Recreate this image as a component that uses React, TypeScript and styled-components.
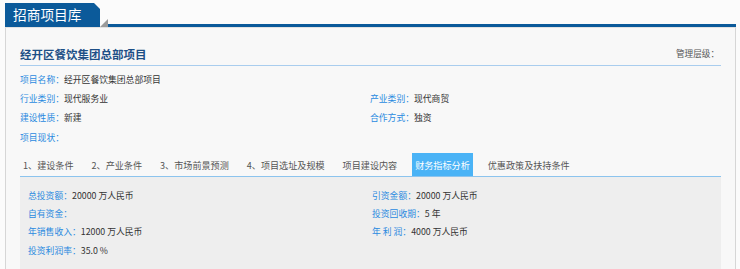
import * as React from "react";
import styled, { createGlobalStyle } from "styled-components";

const GlobalStyle = createGlobalStyle`
  html, body {
    margin: 0;
    padding: 0;
    background: #fbfbfb;
    font-family: "Microsoft YaHei", "Noto Sans CJK SC", "Noto Sans", sans-serif;
  }
`;

const Page = styled.div`
  width: 731px;
  padding: 3px 0 0 5px;
`;

const Header = styled.div`
  display: flex;
  align-items: flex-end;
  height: 24px;
`;

const HeaderTab = styled.div`
  width: 87px;
  height: 24px;
  padding-left: 8px;
  background: #0b5a9a;
  color: #fff;
  font-size: 13.7px;
  line-height: 23px;
  clip-path: polygon(0 0, 89px 0, 95px 6px, 95px 100%, 0 100%);
`;

const Fold = styled.svg`
  display: block;
  flex: none;
`;

const HeaderLine = styled.div`
  flex: 1;
  height: 3px;
  background: #0b5a9a;
`;

const Panel = styled.div`
  background: #f8f8f8;
  border-left: 1px solid #d6d6d6;
  border-right: 1px solid #d6d6d6;
  border-top: 1px solid #e2e2e2;
  padding: 0 14px;
`;

const TitleRow = styled.div`
  display: flex;
  justify-content: space-between;
  align-items: flex-end;
  height: 38px;
  border-bottom: 1px solid #a9cdee;
  box-sizing: border-box;
`;

const Title = styled.h2`
  margin: 0 0 4px;
  font-size: 11.5px;
  line-height: 14px;
  font-weight: bold;
  color: #1d4f86;
`;

const Level = styled.span`
  margin: 0 2px 6px 0;
  font-size: 8.6px;
  line-height: 12px;
  color: #555;
`;

const InfoGrid = styled.div<{ $col: number; $row: number; $top?: number }>`
  display: grid;
  grid-template-columns: ${(p) => p.$col}px 1fr;
  grid-auto-rows: ${(p) => p.$row}px;
  align-items: center;
  margin-top: ${(p) => p.$top ?? 0}px;
`;

const Field = styled.div`
  font-size: 8.8px;
  line-height: 12px;
  color: #333;
  white-space: nowrap;
`;

const Label = styled.span`
  color: #2a8ae0;
`;

const Tabs = styled.div`
  display: flex;
  height: 23px;
  margin-top: 6px;
  border-bottom: 1px solid #8cc4ee;
  box-sizing: content-box;
`;

const Tab = styled.div<{ $active?: boolean }>`
  display: flex;
  align-items: center;
  padding: 0 3px;
  margin-right: 12px;
  font-size: 9.1px;
  white-space: nowrap;
  color: ${(p) => (p.$active ? "#fff" : "#555")};
  background: ${(p) => (p.$active ? "#4ab3f6" : "transparent")};
`;

const Content = styled.div`
  background: #eeeeee;
  padding: 10px 0 9px 8px;
`;

const topFields: [string, string][] = [
  ["项目名称：", "经开区餐饮集团总部项目"],
  ["", ""],
  ["行业类别：", "现代服务业"],
  ["产业类别：", "现代商贸"],
  ["建设性质：", "新建"],
  ["合作方式：", "独资"],
  ["项目现状：", ""],
  ["", ""],
];

const tabs = [
  "1、建设条件",
  "2、产业条件",
  "3、市场前景预测",
  "4、项目选址及规模",
  "项目建设内容",
  "财务指标分析",
  "优惠政策及扶持条件",
];

const finance: [string, string][] = [
  ["总投资额：", "20000 万人民币"],
  ["引资金额：", "20000 万人民币"],
  ["自有资金：", ""],
  ["投资回收期：", "5 年"],
  ["年销售收入：", "12000 万人民币"],
  ["年 利 润：", "4000 万人民币"],
  ["投资利润率：", "35.0 %"],
  ["", ""],
];

const App: React.FC = () => {
  return (
    <>
      <GlobalStyle />
      <Page>
        <Header>
          <HeaderTab>招商项目库</HeaderTab>
          <Fold width="8" height="9" viewBox="0 0 8 9">
            <polygon points="0,9 8,1 8,9" fill="#9a9a9a" />
          </Fold>
          <HeaderLine />
        </Header>
        <Panel>
          <TitleRow>
            <Title>经开区餐饮集团总部项目</Title>
            <Level>管理层级：</Level>
          </TitleRow>
          <InfoGrid $col={350} $row={19.3} $top={4}>
            {topFields.map(([label, value], i) => (
              <Field key={i}>
                <Label>{label}</Label>
                {value}
              </Field>
            ))}
          </InfoGrid>
          <Tabs>
            {tabs.map((t) => (
              <Tab key={t} $active={t === "财务指标分析"}>
                {t}
              </Tab>
            ))}
          </Tabs>
          <Content>
            <InfoGrid $col={344} $row={18.1}>
              {finance.map(([label, value], i) => (
                <Field key={i}>
                  <Label>{label}</Label>
                  {value}
                </Field>
              ))}
            </InfoGrid>
          </Content>
        </Panel>
      </Page>
    </>
  );
};

export default App;
